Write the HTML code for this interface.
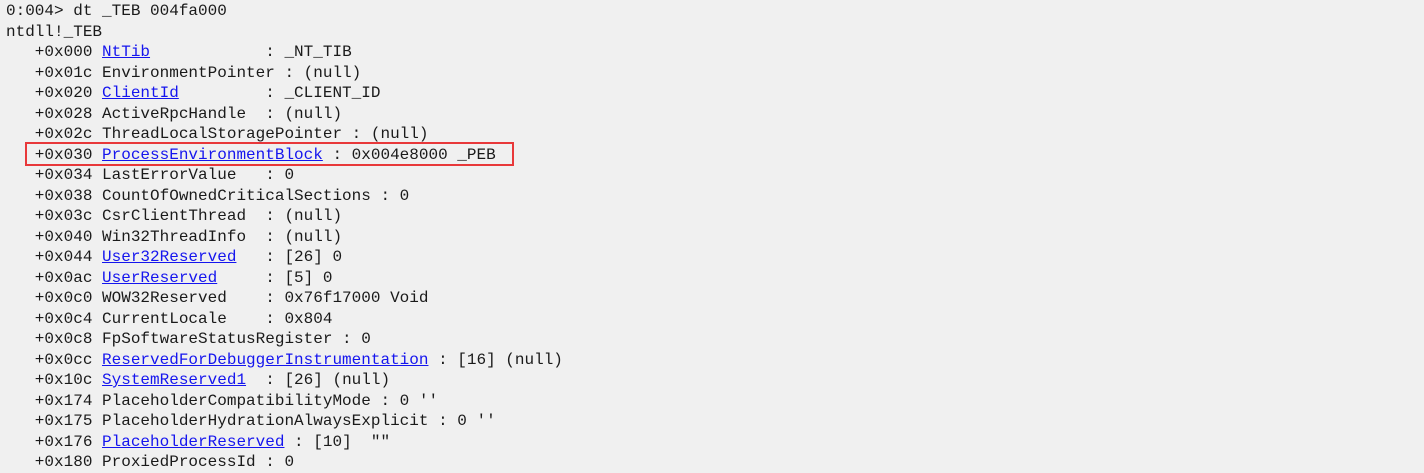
<!DOCTYPE html>
<html><head><meta charset="utf-8"><style>
html,body{margin:0;padding:0;background:#f0f0f0;width:1424px;height:472px;overflow:hidden}
pre{margin:0;position:absolute;left:6px;top:1px;font-family:"Liberation Mono",monospace;font-size:16px;line-height:20.5px;color:#1a1a1a;white-space:pre}
a{color:#1515ee;text-decoration:underline}
.box{position:absolute;left:25px;top:142px;width:485px;height:20px;border:2px solid #e8383a}
</style></head><body>
<pre>0:004&gt; dt _TEB 004fa000
ntdll!_TEB
   +0x000 <a>NtTib</a>            : _NT_TIB
   +0x01c EnvironmentPointer : (null)
   +0x020 <a>ClientId</a>         : _CLIENT_ID
   +0x028 ActiveRpcHandle  : (null)
   +0x02c ThreadLocalStoragePointer : (null)
   +0x030 <a>ProcessEnvironmentBlock</a> : 0x004e8000 _PEB
   +0x034 LastErrorValue   : 0
   +0x038 CountOfOwnedCriticalSections : 0
   +0x03c CsrClientThread  : (null)
   +0x040 Win32ThreadInfo  : (null)
   +0x044 <a>User32Reserved</a>   : [26] 0
   +0x0ac <a>UserReserved</a>     : [5] 0
   +0x0c0 WOW32Reserved    : 0x76f17000 Void
   +0x0c4 CurrentLocale    : 0x804
   +0x0c8 FpSoftwareStatusRegister : 0
   +0x0cc <a>ReservedForDebuggerInstrumentation</a> : [16] (null)
   +0x10c <a>SystemReserved1</a>  : [26] (null)
   +0x174 PlaceholderCompatibilityMode : 0 ''
   +0x175 PlaceholderHydrationAlwaysExplicit : 0 ''
   +0x176 <a>PlaceholderReserved</a> : [10]  ""
   +0x180 ProxiedProcessId : 0</pre>
<div class="box"></div>
</body></html>
